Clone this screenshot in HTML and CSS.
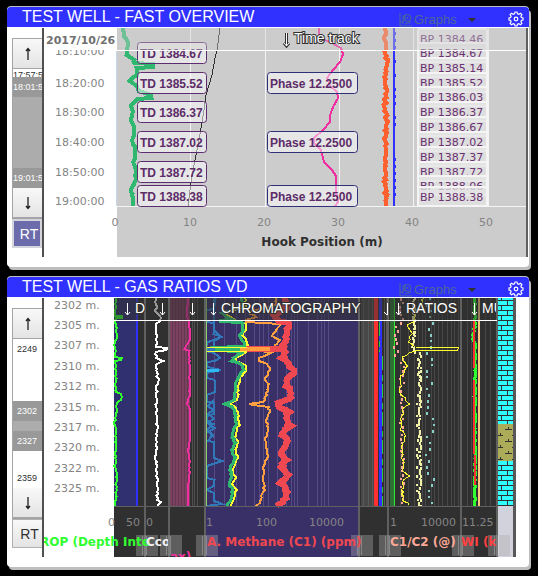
FILE: index.html
```html
<!DOCTYPE html>
<html lang="en">
<head>
<meta charset="utf-8">
<title>Test Well</title>
<link rel="stylesheet" href="styles.css">
</head>
<body>
<svg class="defs" aria-hidden="true">
  <defs>
    <symbol id="gear" viewBox="0 0 16 16"><path d="M7 1h2l.5 1.8 1.3.5L12.500 2.300l1.400 1.400-1 1.700.5 1.100L15 7v2l-1.600.5-.5 1.100 1 1.700-1.400 1.400-1.700-1-1.300.5L9 15H7l-.5-1.800-1.300-.5-1.700 1-1.400-1.400 1-1.700-.5-1.100L1 9V7l1.600-.5.5-1.100-1-1.700 1.400-1.400 1.700 1 1.300-.5z" fill="none" stroke="#fff" stroke-width="1.200"/><circle cx="8" cy="8" r="1.800" fill="none" stroke="#fff" stroke-width="1.200"/></symbol>
    <symbol id="graph" viewBox="0 0 13 14"><path d="M1 0v13h12M1 9h3M4 2v9M6 11l6-2M6 1v7" fill="none" stroke="#466a96" stroke-width="1"/><circle cx="8.500" cy="5" r="3.500" fill="none" stroke="#466a96" stroke-width="1"/><circle cx="8.500" cy="5" r="1" fill="#466a96"/></symbol>
    <symbol id="down" viewBox="0 0 10 14"><path d="M5 1v11.500M3 10l2 2.500L7 10" fill="none" stroke="currentColor" stroke-width="1.300"/></symbol>
    <symbol id="caret" viewBox="0 0 8 4"><path d="M0 0h8L4 4z" fill="#303030"/></symbol>
    <pattern id="brick" width="12" height="10" patternUnits="userSpaceOnUse"><rect width="12" height="10" fill="#30ffff"/><path d="M0 .5h12M0 5.500h12M3.500 0v5M9.500 5v5" stroke="#303030" stroke-width="1"/></pattern>
    <pattern id="marl" width="16" height="12" patternUnits="userSpaceOnUse"><rect width="16" height="12" fill="#acac58"/><path d="M0 3.500h7M4.500 1v3M9 9.500h7M12.500 7v3" stroke="#303030" stroke-width="1"/></pattern>
  </defs>
</svg>
<main class="board">
  <section class="panel">
    <header class="bar">
      <h2 class="title">TEST WELL - FAST OVERVIEW</h2>
      <label class="graphs"><svg class="graph-icon"><use href="#graph"/></svg><select class="pick" aria-label="Graphs"><option>Graphs</option></select><svg class="caret"><use href="#caret"/></svg></label>
      <button class="gear" type="button" aria-label="Settings"><svg><use href="#gear"/></svg></button>
    </header>
    <div class="body">
      <nav class="side">
        <div class="scrub">
          <button class="step" type="button" aria-label="Earlier"><svg class="up"><use href="#down"/></svg></button>
          <div class="edge">17:57:5</div>
          <div class="mark">18:01:5</div>
          <div class="range"></div>
          <div class="mark">19:01:5</div>
          <button class="step" type="button" aria-label="Later"><svg><use href="#down"/></svg></button>
        </div>
        <button class="rt on" type="button">RT</button>
      </nav>
      <svg class="chart" id="overview" viewBox="44 28 482 229">
        <rect x="44" y="28" width="482" height="229" fill="#fff"/>
        <rect x="117" y="28" width="409" height="229" fill="#ccc"/>
        <g class="tick">
          <text x="55" y="55">18:10:00</text><text x="55" y="87">18:20:00</text><text x="55" y="116">18:30:00</text><text x="55" y="146">18:40:00</text><text x="55" y="176">18:50:00</text><text x="55" y="205">19:00:00</text>
        </g>
        <rect x="44" y="28" width="72" height="22" fill="#fff"/>
        <text class="date" x="46" y="44">2017/10/26</text>
        <path class="crisp" d="M116.500 50v156" stroke="#c4d8ee"/>
        <path class="crisp" d="M190.500 28v178M265.500 28v178M339.500 28v178M413.500 28v178M488.500 28v178M117 206.500h409" stroke="#f4f4f4"/>
        <g class="curves"></g>
        <g class="flags"></g>
        <rect x="117" y="28" width="409" height="22" fill="#ccc" fill-opacity=".4"/>
        <path class="crisp" d="M116 50.500h410" stroke="#fff"/>
        <g class="track"><path class="halo" d="M286.500 33v13M284 43l2.500 3 2.500-3"/><path d="M286.500 33v13M284 43l2.500 3 2.500-3"/><text x="294" y="43">Time track</text></g>
        <g class="tick mid"><text x="115" y="226">0</text><text x="190" y="226">10</text><text x="264" y="226">20</text><text x="338" y="226">30</text><text x="412" y="226">40</text><text x="486" y="226">50</text></g>
        <text class="axis mid" x="322" y="246" fill="#303030">Hook Position (m)</text>
      </svg>
    </div>
  </section>

  <section class="panel">
    <header class="bar">
      <h2 class="title">TEST WELL - GAS RATIOS VD</h2>
      <label class="graphs"><svg class="graph-icon"><use href="#graph"/></svg><select class="pick" aria-label="Graphs"><option>Graphs</option></select><svg class="caret"><use href="#caret"/></svg></label>
      <button class="gear" type="button" aria-label="Settings"><svg><use href="#gear"/></svg></button>
    </header>
    <div class="body gas">
      <nav class="side">
        <div class="scrub">
          <button class="step" type="button" aria-label="Shallower"><svg class="up"><use href="#down"/></svg></button>
          <div class="depth above">2249</div>
          <div class="mark dark">2302</div>
          <div class="range"></div>
          <div class="mark dark">2327</div>
          <div class="depth below">2359</div>
          <button class="step" type="button" aria-label="Deeper"><svg><use href="#down"/></svg></button>
        </div>
        <button class="rt" type="button">RT</button>
      </nav>
      <svg class="chart" id="gas" viewBox="44 298 472 259">
        <defs>
          <clipPath id="c2"><rect x="146" y="500" width="22" height="57"/></clipPath>
          <clipPath id="c7"><rect x="462" y="298" width="34" height="259"/></clipPath>
          <clipPath id="c3"><rect x="170" y="500" width="35" height="57"/></clipPath>
        </defs>
        <rect x="44" y="298" width="70" height="259" fill="#fff"/>
        <rect x="114" y="298" width="384" height="259" fill="#303030"/>
        <g class="tick">
          <text x="54" y="309">2302 m.</text><text x="54" y="329">2305 m.</text><text x="54" y="349">2307 m.</text><text x="54" y="370">2310 m.</text><text x="54" y="390">2312 m.</text><text x="54" y="411">2315 m.</text><text x="54" y="431">2317 m.</text><text x="54" y="451">2320 m.</text><text x="54" y="472">2322 m.</text><text x="54" y="492">2325 m.</text>
        </g>
        <rect x="114" y="298" width="22" height="208" fill="#302f70"/>
        <rect x="136" y="298" width="2" height="208" fill="#3030ff"/>
        <rect x="170" y="298" width="20" height="208" fill="#7c4060"/>
        <rect x="206" y="298" width="152" height="259" fill="#3a3068"/>
        <rect x="361" y="298" width="13" height="208" fill="#484848"/>
        <rect x="390" y="298" width="4" height="208" fill="#2d6f34"/>
        <g class="grid"></g>
        <g class="curves"></g>
        <rect x="114" y="298" width="383" height="22" fill="#303030" fill-opacity=".5"/>
        <path class="crisp" d="M114 506.500h384" stroke="#606060"/>
        <path class="crisp" d="M145 298v259M169 298v259M205 298v259M359 298v259M388 298v259M461 298v259M497 298v259" stroke="#606060" stroke-width="2"/>
        <path class="crisp" d="M114 320.500h383" stroke="#fff"/>
        <rect x="498" y="298" width="15" height="126" fill="url(#brick)"/>
        <rect x="498" y="424" width="15" height="37" fill="url(#marl)"/>
        <rect x="498" y="461" width="15" height="45" fill="url(#brick)"/>
        <rect x="498" y="506" width="15" height="51" fill="#d2d2dc"/>
        <path class="crisp" d="M514.500 298v259" stroke="#585858" stroke-width="3"/>
        <g class="track">
          <path d="M127.500 303v12M125 312l2.500 3 2.500-3M162.500 303v12M160 312l2.500 3 2.500-3M192.500 303v12M190 312l2.500 3 2.500-3M213.500 303v12M211 312l2.500 3 2.500-3M387.500 303v12M384 312l3 3M398.500 303v12M396 312l2.500 3 2.500-3M474.500 303v12M472 312l2.500 3 2.500-3"/>
          <text x="135" y="313">D</text><text x="221" y="313">CHROMATOGRAPHY</text><text x="406" y="313">RATIOS</text><text x="482" y="313" clip-path="url(#c7)">MU</text>
        </g>
        <g class="tick"><text x="108" y="526">0</text><text x="126" y="526">50</text><text x="146" y="526">0</text><text x="206" y="526">1</text><text x="256" y="526">100</text><text x="309" y="526">10000</text><text x="390" y="526">1</text><text x="421" y="526">10000</text><text x="462" y="526">11.25</text></g>
        <g class="grips"></g>
        <g class="axis">
          <text x="40" y="546" fill="#30ff30">ROP (Depth Inte</text>
          <text x="146" y="546" fill="#f0f0f0" clip-path="url(#c2)">Cco</text>
          <text x="170" y="561" fill="#f030a0" clip-path="url(#c3)">ax)</text>
          <text x="207" y="546" fill="#f04850">A. Methane (C1) (ppm)</text>
          <text x="360" y="565" fill="#30ff30">unce</text>
          <text x="390" y="546" fill="#fba896">C1/C2 (@)</text>
          <text x="461" y="546" fill="#ff4040" clip-path="url(#c7)">WI (kg</text>
        </g>
      </svg>
    </div>
  </section>
</main>
<script src="script.js"></script>
</body>
</html>
```
FILE: styles.css
```css
* { box-sizing: border-box; }
body { margin: 0; background: #000; font-family: "Liberation Sans", Arial, sans-serif; }
svg { display: block; }
button { margin: 0; padding: 0; border: 0; font: inherit; }
.defs { position: absolute; width: 0; height: 0; }
.board { display: flex; flex-direction: column; gap: 10px; padding: 7px 9px 6px 7px; }
.panel { background: #fff; border-radius: 4px; padding-bottom: 10px; box-shadow: 2px 3px 0 #bebebe, 0 -1px 0 #bebebe; }
.bar { display: flex; align-items: center; height: 20px; padding: 0 5px 0 15px; background: #3030ff; border-radius: 4px 4px 0 0; }
.title { flex: 1; margin: 0; font-size: 16px; line-height: 20px; font-weight: 400; color: #fff; white-space: nowrap; }
.graphs { display: flex; align-items: center; height: 20px; padding-top: 6px; margin-right: 32px; }
.graph-icon { width: 13px; height: 14px; }
.pick { appearance: none; width: 56px; height: 18px; margin: 0; padding: 0 0 0 2px; border: 0; background: none; color: #4a6a98; font: 13px/18px "Liberation Sans", Arial, sans-serif; }
.caret { width: 8px; height: 4px; }
.gear { width: 16px; height: 16px; margin-top: 4px; background: none; }
.gear svg { width: 16px; height: 16px; }
.body { display: flex; align-items: flex-start; margin-top: 1px; padding-right: 1px; }
.body .chart { flex: 1; min-width: 0; height: auto; border-right: 2px solid #606060; }
.body.gas { padding-right: 13px; }
.body.gas .chart { border-right: 0; }
.side { align-self: stretch; width: 37px; flex: none; overflow: hidden; padding: 10px 0 0 5px; border-right: 2px solid #505050; }
.scrub { border: 1px solid #a4a4a4; border-right: 0; background: #fff; font-size: 9px; color: #303030; overflow: hidden; }
.step { display: flex; align-items: center; justify-content: center; width: 100%; height: 30px; border-bottom: 1px solid #a4a4a4; background: linear-gradient(#f8f8f8, #e4e4e4); color: #202020; }
.step svg { width: 10px; height: 14px; }
.step .up { transform: rotate(180deg); }
.mark { height: 20px; background: #999; color: #fff; line-height: 20px; white-space: nowrap; }
.mark.dark, .depth { padding-left: 4px; }
.edge { height: 8px; line-height: 12px; overflow: hidden; }
.range { height: 71px; background: #acacac; }
.gas .range { height: 10px; }
.above { height: 62px; line-height: 20px; }
.below { height: 37px; padding-top: 17px; line-height: 20px; }
.rt { width: 100%; height: 29px; border: 1px solid #b0b0b0; border-right: 0; padding-left: 4px; background: linear-gradient(#f8f8f8, #e4e4e4); color: #303030; font-size: 14px; }
.rt.on { border: 2px solid #d4d4dc; background: #6c6cac; color: #fff; }
.tick { font: 11px "DejaVu Sans", sans-serif; fill: #848484; }
.mid { text-anchor: middle; }
.date { font: bold 11px "DejaVu Sans", sans-serif; fill: #707070; }
.axis { font: bold 12px "DejaVu Sans", sans-serif; }
.track { font: 14px "Liberation Sans", Arial, sans-serif; fill: #fff; }
.track text { stroke: #303030; stroke-width: 2px; paint-order: stroke; }
.track path { fill: none; stroke: #fff; stroke-width: 1px; }
.track .halo { stroke: #303030; stroke-width: 3px; }
.crisp, .curves path, .grid path, .flags rect { shape-rendering: crispEdges; fill: none; }
.flag { font: bold 12px "Liberation Sans", Arial, sans-serif; fill: #5c2c68; }
.bit { font: 11px "DejaVu Sans", sans-serif; fill: #6a3070; }
```
FILE: script.js
```js
const NS = 'http://www.w3.org/2000/svg';
let seed = 7;
const rnd = () => (seed = (seed * 16807) % 2147483647) / 2147483647 - 0.5;

function add(parent, tag, attrs, text) {
  const el = document.createElementNS(NS, tag);
  for (const k in attrs) el.setAttribute(k, attrs[k]);
  if (text) el.textContent = text;
  parent.appendChild(el);
  return el;
}

// Draws a polyline through the key points, with noise between them.
function curve(parent, color, width, noise, pts, dx = 0) {
  let d = `M${pts[0] + dx} ${pts[1]}`;
  for (let i = 2; i < pts.length; i += 2) {
    const [x0, y0, x1, y1] = [pts[i - 2], pts[i - 1], pts[i], pts[i + 1]];
    const n = Math.max(1, Math.round((y1 - y0) / 2));
    for (let k = 1; k <= n; k++) {
      const x = x0 + (x1 - x0) * k / n + rnd() * noise + dx;
      d += `L${x.toFixed(1)} ${(y0 + (y1 - y0) * k / n).toFixed(1)}`;
    }
  }
  add(parent, 'path', { d, stroke: color, 'stroke-width': width });
}

function dots(parent, color, x, spread, y0, y1, step) {
  let d = '';
  for (let y = y0; y < y1; y += step) d += `M${Math.round(x(y) + rnd() * spread)} ${y}v${2 + Math.round(rnd() + 0.5)}`;
  add(parent, 'path', { d, stroke: color, 'stroke-width': 2 });
}

const a = document.querySelector('#overview .curves');
curve(a, '#30b870', 4, 1, [123,28,124,36,128,42,127,50,127,55,134,60,134,63,153,64,153,67,137,68,137,75,133,77,129,81,136,85,139,91,151,95,151,98,137,99,131,106,133,112,131,120,134,128,134,135,132,141,135,148,135,158,133,162,136,170,135,182,131,190,133,198,133,206]);
curve(a, '#303030', 1, 0, [220,28,217,50,215,58,212,75,206,95,204,110,201,128,198,145,194,165,191,182,188,206]);
curve(a, '#f030a0', 2, 0, [319,28,319,38,330,42,341,48,343,54,340,62,333,70,327,78,330,86,337,92,338,98,333,107,330,115,330,122,323,130,314,138,314,143,321,150,324,162,332,170,336,176,336,192,338,202,335,206]);
curve(a, '#ff6030', 4, 3, [385,28,385,50,387,60,385,75,386,90,385,105,387,125,385,140,386,160,385,180,386,195,385,206]);
curve(a, '#3030ff', 2, 0, [394,28,394,206]);
for (let y = 32; y < 206; y += 7) if (rnd() > 0) add(a, 'path', { d: `M395.5 ${y}v3`, stroke: '#3030ff' });

const f = document.querySelector('#overview .flags');
function flag(x, y, w, stroke, text) {
  add(f, 'rect', { x: x + 0.5, y: y + 0.5, width: w, height: 21, rx: 3, stroke, style: 'fill:#fff;fill-opacity:.5;shape-rendering:auto' });
  add(f, 'text', { x: x + 3, y: y + 16, class: 'flag' }, text);
}
[[42, 'TD 1384.67'], [72, 'TD 1385.52'], [101, 'TD 1386.37'], [131, 'TD 1387.02'], [161, 'TD 1387.72'], [185, 'TD 1388.38']]
  .forEach(([y, t]) => flag(137, y, 69, '#5c2c70', t));
[72, 131, 185].forEach(y => flag(267, y, 90, '#303078', 'Phase 12.2500'));
[[39, '1384.46'], [53, '1384.67'], [68, '1385.14'], [83, '1385.52'], [97, '1386.03'], [112, '1386.37'], [127, '1386.67'], [142, '1387.02'], [157, '1387.37'], [172, '1387.72'], [186, '1388.06'], [197, '1388.38']]
  .forEach(([y, t]) => {
    add(f, 'rect', { x: 418, y: y - 10, width: 69, height: 19, rx: 2, stroke: '#f4f4f4', 'stroke-width': 2, style: 'fill:#e4e4e4;fill-opacity:.75' });
    add(f, 'text', { x: 420, y: y + 4, class: 'bit' }, 'BP ' + t);
  });

const g = document.querySelector('#gas .grid');
const lines = (xs, stroke, y1 = 506) => add(g, 'path', { d: xs.map(x => `M${x + 0.5} 298V${y1}`).join(''), stroke });
lines([172, 175, 178, 181, 184, 187], '#64384e');
lines([192, 194, 197], '#505050');
lines([214, 224, 236, 245, 254, 259, 263, 268, 277, 286, 291, 294, 297, 308, 317, 321, 324, 328], '#564b86');
lines([363, 368, 372, 384, 386], '#5a5a5a');
lines([400, 408, 414, 418, 422, 425, 431, 434, 438, 442, 447, 451, 454, 458], '#484848');
lines([467, 471, 485, 490], '#484848');

const c = document.querySelector('#gas .curves');
curve(c, '#30ff30', 2, 2, [116,298,115,315,116,330,117,336,115,345,115,357,122,358,122,360,116,361,116,392,121,394,121,400,117,402,115,420,116,440,115,470,117,475,115,506]);
add(c, 'path', { d: 'M115 317h8', stroke: '#30ff30', 'stroke-width': 4 });
curve(c, '#fff', 2, 2, [156,298,156,312,161,317,161,321,156,324,156,347,167,348,167,350,156,352,157,358,163,361,156,365,158,380,156,395,157,420,156,460,158,490,157,500,160,502,157,506]);
curve(c, '#f030a0', 2, 1, [188,298,187,315,189,322,190,340,184,349,189,351,190,395,187,403,190,410,190,440,188,450,190,460,188,490,188,506]);
curve(c, '#3078b8', 2, 1, [216,298,214,308,206,311,206,322,214,323,214,334,221,337,208,342,206,347,206,351,214,353,220,358,214,361,207,362,207,367,221,370,207,373,207,378,215,380,215,392,207,395,207,402,214,403,214,414,207,416,208,422,214,424,207,430,214,435,207,441,214,442,214,458,222,461,207,466,207,478,214,480,214,486,207,490,214,493,214,501,222,504,207,506]);
curve(c, '#3078b8', 2, 1, [214,298,214,330,221,337,214,341,214,346]);
curve(c, '#3078b8', 2, 2, [214,400,208,406,214,410,208,414,214,419,208,423,214,428,208,432,214,437]);
add(c, 'path', { d: 'M206.5 298V506', stroke: '#90d070' });
add(c, 'path', { d: 'M207 370h12', stroke: '#30b8f0', 'stroke-width': 3 });
const heavy = [242,298,243,306,222,313,230,319,220,321,243,323,243,330,240,335,243,341,244,346,209,348,209,350,243,352,233,358,232,361,241,364,244,370,238,377,235,385,235,400,225,404,232,407,235,412,236,425,232,435,235,443,232,450,235,458,230,470,232,478,229,484,233,490,230,500,227,506];
curve(c, '#ffff30', 2, 2, heavy, 3);
curve(c, '#30b870', 3, 2, heavy);
curve(c, '#ffa040', 2, 2, [276,298,276,305,248,312,256,317,246,320,246,322,280,324,276,330,272,336,279,340,274,347,238,348,238,350,272,352,260,358,259,361,268,364,270,370,265,380,269,384,266,395,263,402,248,404,268,407,270,412,266,420,268,428,265,440,268,456,263,466,264,490,260,503,256,506]);
curve(c, '#f04850', 6, 3, [285,298,286,308,274,315,280,321,288,323,287,335,284,345,284,352,283,358,292,368,294,372,288,379,286,384,291,392,290,399,278,403,280,407,288,412,286,418,290,426,281,433,288,441,280,452,287,460,280,467,288,475,281,483,286,490,286,498,278,506]);
add(c, 'path', { d: 'M246 349h36', stroke: '#f04850', 'stroke-width': 6 });
add(c, 'path', { d: 'M238 349h32', stroke: '#ffa040', 'stroke-width': 4 });
add(c, 'path', { d: 'M207 347h40M207 351h40', stroke: '#ffff30', 'stroke-width': 1 });
add(c, 'path', { d: 'M215 349h25', stroke: '#30b870', 'stroke-width': 3 });
add(c, 'path', { d: 'M207 349h8', stroke: '#3078b8', 'stroke-width': 3 });
add(c, 'path', { d: 'M376 298V506', stroke: '#ff3030', 'stroke-width': 4 });
add(c, 'path', { d: 'M380.5 298V506', stroke: '#3030ff', 'stroke-width': 3 });
add(c, 'path', { d: 'M382.5 356V506M379.500 322v30', stroke: '#30c840', 'stroke-dasharray': '14 5 6 3' });
curve(c, '#30e830', 1, 0, [394,298,394,446,395,450,394,454,394,506]);
dots(c, '#fba896', y => y < 325 ? 402 : y < 356 ? 396 : 402, 4, 298, 506, 4);
dots(c, '#f0f0a8', y => y < 352 ? 414 : 419, 4, 298, 506, 3);
dots(c, '#f0f0a8', y => y < 352 ? 414 : 420, 3, 299, 506, 4);
dots(c, '#88d0c8', y => y < 356 ? 429 : 430, 9, 298, 506, 6);
curve(c, '#ffff30', 1, 3, [424,298,416,312,413,322,407,325,412,332,408,342,414,347,459,348,459,350,414,351,402,357,406,366,401,378,400,392,410,404,402,410,402,430,406,436,402,445,403,470,410,476,402,482,403,500,410,505]);
curve(c, '#30ff30', 3, 2, [475,298,475,325,473,335,475,345,475,506]);
add(c, 'path', { d: 'M473.5 320v48M474 380v74M475 455v30', stroke: '#ff3030', 'stroke-width': 2 });
add(c, 'path', { d: 'M479 298V506', stroke: '#ffc880', 'stroke-width': 2 });

const grips = document.querySelector('#gas .grips');
[136, 160, 196, 351, 379, 452, 488].forEach(x => {
  add(grips, 'rect', { x, y: 535, width: 22, height: 21, fill: '#aaa', 'fill-opacity': 0.38 });
  add(grips, 'path', { d: `M${x + 6.5} 536v19M${x + 10.5} 536v19`, stroke: '#fff', 'stroke-opacity': 0.25 });
});
```
